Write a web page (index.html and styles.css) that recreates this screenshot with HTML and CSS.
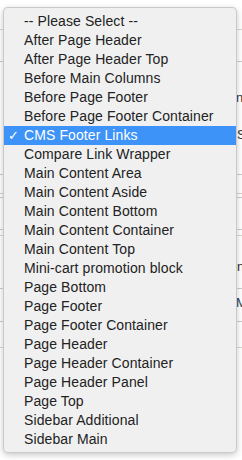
FILE: index.html
```html
<!DOCTYPE html>
<html lang="en">
<head>
  <meta charset="UTF-8">
  <title>Container select</title>
  <link rel="stylesheet" href="styles.css">
</head>
<body>
  <div class="page">
    <div class="band band-a"></div>
    <div class="band band-b"></div>
    <div class="band band-c">
      <span class="peek peek-np">np</span>
      <span class="peek peek-s">S</span>
    </div>
    <div class="band band-d"></div>
    <div class="band band-e"></div>
    <div class="band band-f"></div>
    <div class="band band-g"></div>
    <div class="band band-h">
      <span class="peek peek-nt">nt</span>
    </div>
    <div class="band band-i">
      <span class="peek peek-ms">MS</span>
    </div>
    <div class="band band-j"></div>
  </div>

  <ul class="menu">
    <li class="menu_item">-- Please Select --</li>
    <li class="menu_item">After Page Header</li>
    <li class="menu_item">After Page Header Top</li>
    <li class="menu_item">Before Main Columns</li>
    <li class="menu_item">Before Page Footer</li>
    <li class="menu_item">Before Page Footer Container</li>
    <li class="menu_item selected"><span class="check">&#10003;</span>CMS Footer Links</li>
    <li class="menu_item">Compare Link Wrapper</li>
    <li class="menu_item">Main Content Area</li>
    <li class="menu_item">Main Content Aside</li>
    <li class="menu_item">Main Content Bottom</li>
    <li class="menu_item">Main Content Container</li>
    <li class="menu_item">Main Content Top</li>
    <li class="menu_item">Mini-cart promotion block</li>
    <li class="menu_item">Page Bottom</li>
    <li class="menu_item">Page Footer</li>
    <li class="menu_item">Page Footer Container</li>
    <li class="menu_item">Page Header</li>
    <li class="menu_item">Page Header Container</li>
    <li class="menu_item">Page Header Panel</li>
    <li class="menu_item">Page Top</li>
    <li class="menu_item">Sidebar Additional</li>
    <li class="menu_item">Sidebar Main</li>
  </ul>
</body>
</html>
```

FILE: styles.css
```css
body {
  margin: 0;
  padding: 0;
  background-color: #fff;
  font-family: "Liberation Sans", Arial, sans-serif;
  overflow: hidden;
}

/* page behind the open select */
.page {
  display: flex;
  flex-direction: column;
  width: 242px;
  height: 460px;
  overflow: hidden;
}

.band {
  flex: none;
  border-bottom: 1px solid #cbcbcb;
}

.band-a { height: 29px; border-bottom-color: #dcd7ce; }
.band-b { height: 31px; }
.band-c { height: 112px; }
.band-d { height: 18px; border-bottom-color: #d9d3c7; }
.band-e { height: 3px; }
.band-f { height: 31px; }
.band-g { height: 5px; border-bottom-color: #dcd6ca; }
.band-h { height: 52px; }
.band-i { height: 32px; }
.band-j { height: 25px; border-bottom-color: #dcd6ca; }

.peek {
  display: block;
  width: 6px;
  margin-left: 236px;
  overflow: hidden;
  font-size: 13px;
  line-height: 15px;
  color: #333;
  white-space: nowrap;
}

.peek-np { margin-top: 28px; }
.peek-s { margin-top: 22px; width: 5px; margin-left: 237px; }
.peek-nt { margin-top: 23px; width: 5px; margin-left: 237px; }
.peek-ms { margin-top: 6px; color: #2c3e55; }

/* dropdown list */
.menu {
  position: absolute;
  left: 3px;
  top: 7px;
  width: 234px;
  height: 446px;
  box-sizing: border-box;
  margin: 0;
  padding: 4px 0 3px;
  list-style: none;
  background-color: #f0f0f0;
  border: 1px solid rgba(0, 0, 0, 0.16);
  border-radius: 5px;
  box-shadow: 0 2px 6px rgba(0, 0, 0, 0.22);
}

.menu_item {
  position: relative;
  height: 19px;
  line-height: 19px;
  padding-left: 20px;
  font-size: 14px;
  letter-spacing: 0.1px;
  color: #222;
  white-space: nowrap;
}

.menu_item.selected {
  background-color: #3d93f8;
  color: #fff;
}

.check {
  position: absolute;
  left: 4px;
  top: 0;
  font-family: "DejaVu Sans", sans-serif;
  font-size: 13px;
  font-weight: bold;
}
```
